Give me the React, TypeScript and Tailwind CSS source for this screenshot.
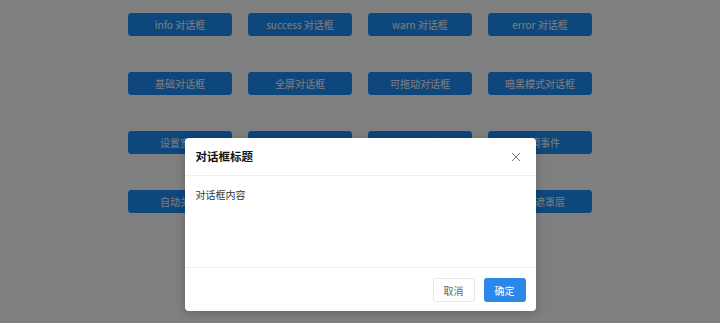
import React from 'react';

const rows: string[][] = [
  ['info 对话框', 'success 对话框', 'warn 对话框', 'error 对话框'],
  ['基础对话框', '全屏对话框', '可拖动对话框', '暗黑模式对话框'],
  ['设置宽度', '自定义页脚', '嵌套对话框', '回调事件'],
  ['自动关闭', '异步关闭', '禁止拖动', '关闭遮罩层'],
];

const App: React.FC = () => {
  return (
    <div
      className="relative w-[720px] h-[323px] bg-white overflow-hidden"
      style={{ fontFamily: '"Noto Sans CJK SC", "Noto Sans", sans-serif' }}
    >
      {/* demo buttons */}
      <div className="grid grid-cols-[repeat(4,104px)] justify-center gap-x-4 gap-y-[36px] pt-[13px]">
        {rows.flat().map((label) => (
          <button
            key={label}
            className="h-[23px] rounded-[3px] bg-[#1a8ef8] border border-[#1a8ef8] text-white text-[10px] leading-none"
          >
            {label}
          </button>
        ))}
      </div>

      {/* modal mask */}
      <div className="absolute inset-0 bg-[rgba(0,0,0,0.5)] flex justify-center items-start">
        <div className="mt-[138px] w-[351px] h-[173px] bg-white rounded-[4px] shadow-[0_2px_10px_rgba(0,0,0,0.2)] flex flex-col">
          <div className="h-[38px] flex items-center justify-between pl-[11px] pr-[11px] border-b border-[#ebeef5]">
            <span className="text-[11.5px] font-bold text-[#111]">对话框标题</span>
            <svg width="10" height="10" viewBox="0 0 10 10" className="mr-[4px]">
              <path d="M1 1L9 9M9 1L1 9" stroke="#777" strokeWidth="1" fill="none" />
            </svg>
          </div>
          <div className="flex-1 px-[11px] pt-[11px] text-[10px] text-[#333]">对话框内容</div>
          <div className="h-[44px] border-t border-[#ebeef5] flex items-start justify-end gap-[9px] pt-[10px] pr-[10px]">
            <button className="w-[42px] h-[24px] rounded-[3px] border border-[#e4e7ed] bg-white text-[10px] text-[#666]">
              取消
            </button>
            <button className="w-[42px] h-[24px] rounded-[3px] bg-[#2b88e8] text-[10px] text-white">
              确定
            </button>
          </div>
        </div>
      </div>
    </div>
  );
};

export default App;
